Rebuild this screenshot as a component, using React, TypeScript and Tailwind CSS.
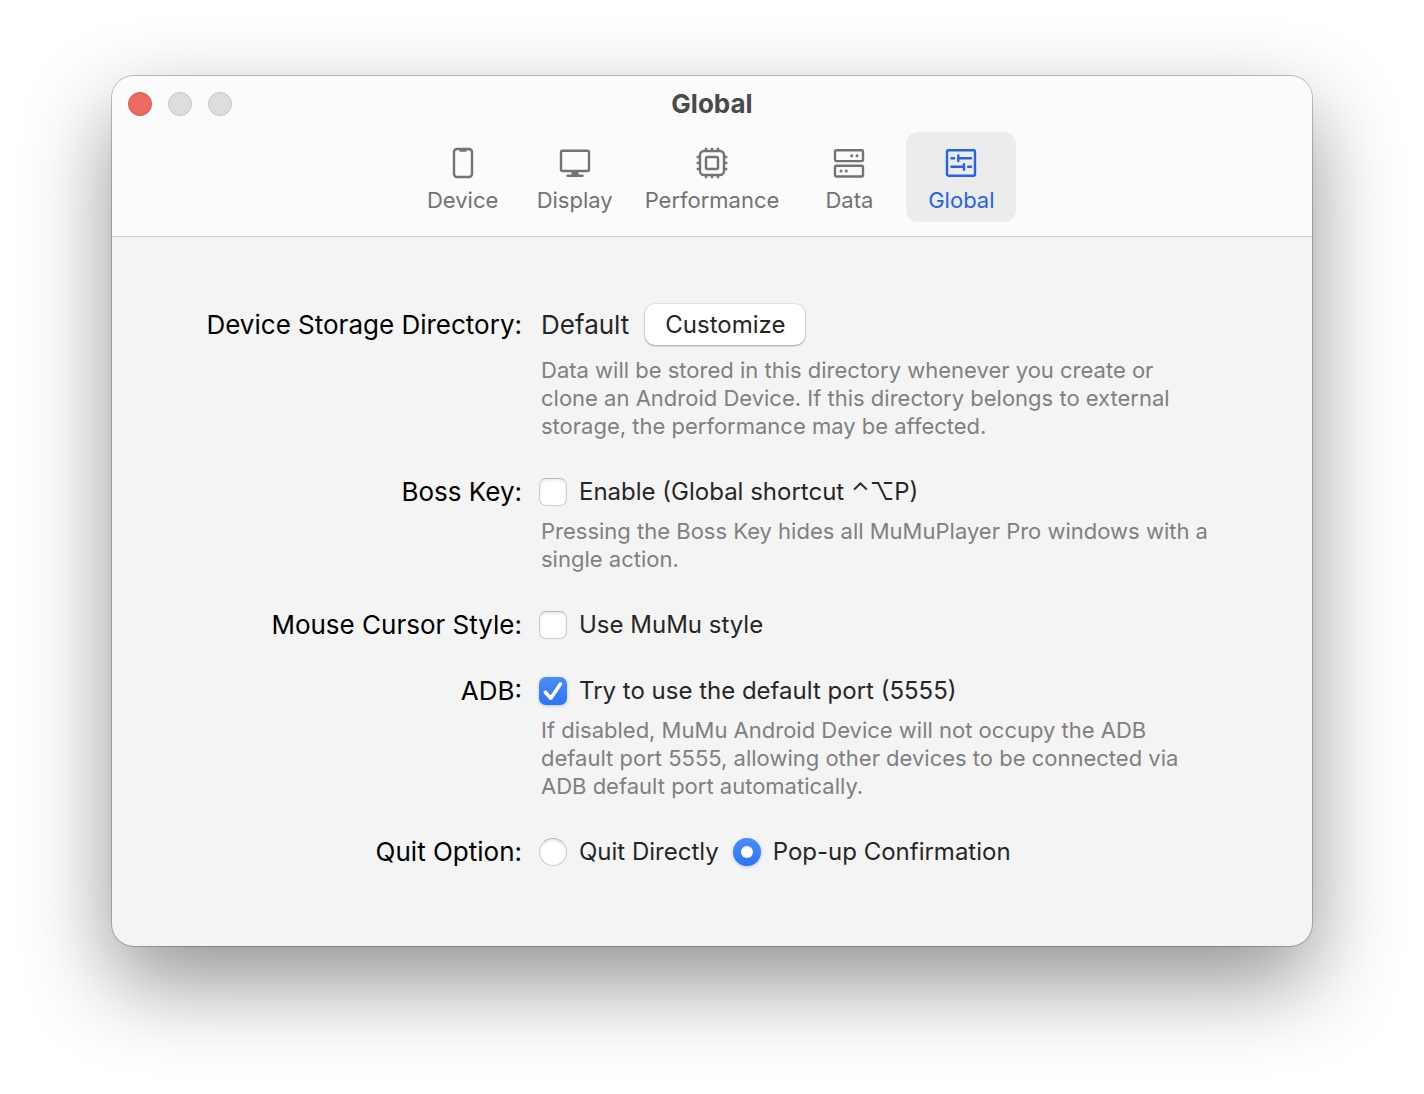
import React, { useState } from "react";

interface Tab {
  name: string;
  icon: React.ReactNode;
}

const tabs: Tab[] = [
  {
    name: "Device",
    icon: (
      <>
        <rect x="7" y="2" width="18" height="28" rx="3" />
        <path d="M13.5 3.5h5" />
      </>
    ),
  },
  {
    name: "Display",
    icon: (
      <>
        <rect x="2" y="3.8" width="28" height="20.2" rx="1.5" />
        <path d="M12.5 25h7v3h-7z" fill="currentColor" stroke="none" />
        <path d="M8.5 28.8h15" />
      </>
    ),
  },
  {
    name: "Performance",
    icon: (
      <>
        <rect x="4" y="4" width="24" height="24" rx="4" />
        <rect x="10" y="10" width="12" height="12" rx="1.5" />
        <path
          d="M10 .7v2.8M16 .7v2.8M22 .7v2.8M10 28.5v2.8M16 28.5v2.8M22 28.5v2.8M.7 10h2.8M.7 16h2.8M.7 22h2.8M28.5 10h2.8M28.5 16h2.8M28.5 22h2.8"
          strokeLinecap="butt"
        />
      </>
    ),
  },
  {
    name: "Data",
    icon: (
      <>
        <rect x="2" y="3.3" width="28" height="10.8" rx="1.5" />
        <rect x="2" y="18.7" width="28" height="10.8" rx="1.5" />
        <g fill="currentColor" stroke="none">
          <circle cx="18.7" cy="8.7" r="1.5" />
          <circle cx="24" cy="8.7" r="1.5" />
          <circle cx="8" cy="24.1" r="1.5" />
          <circle cx="13.3" cy="24.1" r="1.5" />
        </g>
      </>
    ),
  },
  {
    name: "Global",
    icon: (
      <>
        <rect x="2" y="3.3" width="28" height="25.4" rx="1.5" />
        <path d="M6.5 11.2h2.5M13.3 8.5v5.6M13.3 11.2H26M6.5 19.8H19M19 17.2v5.6M23.2 19.8H26" />
      </>
    ),
  },
];

interface ChoiceProps {
  type: "checkbox" | "radio";
  name: string;
  label: string;
  defaultChecked?: boolean;
}

const Choice: React.FC<ChoiceProps> = ({ type, name, label, defaultChecked }) => (
  <label className="flex items-center gap-3 text-[#262626]">
    <span className="grid size-7 shrink-0 place-items-center">
      <input
        type={type}
        name={name}
        defaultChecked={defaultChecked}
        className={`peer col-start-1 row-start-1 size-7 appearance-none border border-[#cccccc] border-t-[#b8b8b8] bg-white shadow-[inset_0_2px_3px_rgba(0,0,0,0.08)] checked:border-transparent checked:bg-linear-to-b checked:from-[#4a8df8] checked:to-[#2f72f6] checked:bg-origin-border checked:shadow-[0_1px_3px_rgba(47,114,246,0.35)] ${
          type === "radio" ? "rounded-full" : "rounded-[7px]"
        }`}
      />
      {type === "radio" ? (
        <span className="pointer-events-none z-10 col-start-1 row-start-1 hidden size-3 rounded-full bg-white peer-checked:block" />
      ) : (
        <svg
          viewBox="0 0 28 28"
          className="pointer-events-none z-10 col-start-1 row-start-1 hidden size-7 fill-none stroke-white stroke-[3.6] peer-checked:block"
          strokeLinecap="round"
          strokeLinejoin="round"
        >
          <path d="M6.4 15.2l5.4 6L21.4 7" />
        </svg>
      )}
    </span>
    {label}
  </label>
);

interface RowProps {
  title: string;
  hint?: string;
  children: React.ReactNode;
}

const Row: React.FC<RowProps> = ({ title, hint, children }) => (
  <div role="group" aria-label={title} className="grid grid-cols-[410px_minmax(0,1fr)] gap-x-[17px]">
    <div className="flex items-center justify-end text-[26px] leading-7 text-black">{title}</div>
    <div className="flex items-center gap-[14px] text-[24px] leading-7">{children}</div>
    {hint && (
      <p className="col-start-2 mt-[11px] max-w-[672px] pl-[2px] text-[22px] leading-7 text-[#808080]">{hint}</p>
    )}
  </div>
);

export default function App() {
  const [active, setActive] = useState("Global");

  return (
    <div className="min-h-screen bg-white px-28 pt-[76px] pb-[148px] font-['Inter',sans-serif]">
      <main className="overflow-hidden rounded-[22px] bg-[#f4f4f4] shadow-[0_0_0_1px_rgba(0,0,0,0.22),0_36px_88px_rgba(0,0,0,0.43)]">
        <header className="border-b border-[#cfcfcf] bg-[#fbfbfb] pb-[14px]">
          <div className="grid h-14 grid-cols-[1fr_auto_1fr] items-center px-4">
            <div className="flex gap-4">
              <button aria-label="Close" className="size-6 rounded-full border border-[#d3574c] bg-[#ed6a5e]" />
              <button aria-label="Minimize" className="size-6 rounded-full border border-[#c6c6c6] bg-[#dddddd]" />
              <button aria-label="Zoom" className="size-6 rounded-full border border-[#c6c6c6] bg-[#dddddd]" />
            </div>
            <h1 className="text-[26px] leading-7 font-bold text-[#4a4a4a]">Global</h1>
          </div>
          <nav className="flex justify-center gap-[2px]">
            {tabs.map((tab) => (
              <button
                key={tab.name}
                onClick={() => setActive(tab.name)}
                className={`flex h-[90px] min-w-[110px] flex-col items-center rounded-xl px-[13px] pt-[15px] text-[22px] leading-7 ${
                  active === tab.name ? "bg-[#ececec] text-[#2563e8]" : "text-[#737373]"
                }`}
              >
                <svg
                  viewBox="0 0 32 32"
                  className="mb-[7px] size-8 fill-none stroke-current stroke-[2.4]"
                  strokeLinecap="round"
                  strokeLinejoin="round"
                >
                  {tab.icon}
                </svg>
                {tab.name}
              </button>
            ))}
          </nav>
        </header>

        <form className="flex flex-col gap-[38px] pt-[67px] pb-20">
          <Row
            title="Device Storage Directory:"
            hint="Data will be stored in this directory whenever you create or clone an Android Device. If this directory belongs to external storage, the performance may be affected."
          >
            <span className="px-[2px] text-[26px] text-[#262626]">Default</span>
            <button
              type="button"
              className="h-[41px] rounded-[10px] bg-white px-5 text-[#262626] shadow-[0_0_0_1px_rgba(0,0,0,0.06),0_1px_2px_rgba(0,0,0,0.3)]"
            >
              Customize
            </button>
          </Row>
          <Row
            title="Boss Key:"
            hint="Pressing the Boss Key hides all MuMuPlayer Pro windows with a single action."
          >
            <Choice type="checkbox" name="bossKey" label="Enable (Global shortcut ⌃⌥P)" />
          </Row>
          <Row title="Mouse Cursor Style:">
            <Choice type="checkbox" name="cursorStyle" label="Use MuMu style" />
          </Row>
          <Row
            title="ADB:"
            hint="If disabled, MuMu Android Device will not occupy the ADB default port 5555, allowing other devices to be connected via ADB default port automatically."
          >
            <Choice type="checkbox" name="adb" label="Try to use the default port (5555)" defaultChecked />
          </Row>
          <Row title="Quit Option:">
            <Choice type="radio" name="quit" label="Quit Directly" />
            <Choice type="radio" name="quit" label="Pop-up Confirmation" defaultChecked />
          </Row>
        </form>
      </main>
    </div>
  );
}
